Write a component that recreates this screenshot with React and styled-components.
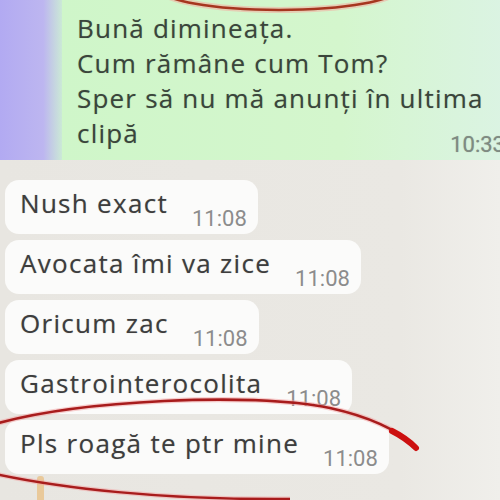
import React from 'react';
import styled, { createGlobalStyle } from 'styled-components';

const GlobalStyle = createGlobalStyle`
    body {
        margin: 0;
        background: #e9e7e2;
    }
`

const Screen = styled.div`
    position: relative;
    width: 500px;
    height: 500px;
    overflow: hidden;
    display: flex;
    flex-direction: column;
    background: linear-gradient(90deg, #e8e6e1 0%, #eae8e3 80%, #f0efeb 100%);
    font-family: "Open Sans", Roboto, sans-serif;
`

const TopRow = styled.div`
    display: flex;
    height: 160px;
    flex-shrink: 0;
`

const SideStrip = styled.div`
    width: 62px;
    flex-shrink: 0;
    background: linear-gradient(90deg, #b2aaf2 0%, #bdb6f0 70%, #cbe9d6 100%);
`

const OutBubble = styled.div`
    flex: 1;
    margin-right: -26px;
    padding: 11px 21px 0 15px;
    background: linear-gradient(90deg, #cff6c9 0%, #d4f6cd 60%, #dcf3e6 100%);
    font-size: 26px;
    line-height: 35px;
    letter-spacing: 1.2px;
    color: #3a453b;
    text-shadow: 0 0 1px rgba(40, 60, 40, 0.35);
    white-space: nowrap;
`

const LastLine = styled.div`
    display: flex;
    justify-content: space-between;
    align-items: flex-end;
`

const Time = styled.span`
    font-family: Roboto, "Open Sans", sans-serif;
    font-size: 22px;
    line-height: 21px;
    letter-spacing: 0;
    color: ${p => p.out ? '#7f8a82' : '#8c8c8c'};
    margin-left: ${p => p.out ? '0' : '24px'};
    margin-bottom: ${p => p.out ? '-4px' : '0'};
    white-space: nowrap;
`

const List = styled.div`
    display: flex;
    flex-direction: column;
    align-items: flex-start;
    gap: 6px;
    padding: 20px 0 0 5px;
`

const Bubble = styled.div`
    box-sizing: border-box;
    height: 54px;
    display: flex;
    align-items: flex-end;
    padding: 0 11px 5px 15px;
    background: #fbfbfa;
    border-radius: 14px;
`

const BubbleText = styled.span`
    font-size: 26px;
    line-height: 26px;
    letter-spacing: 1.3px;
    color: #3d3d3d;
    text-shadow: 0 0 1px rgba(0, 0, 0, 0.3);
    margin-bottom: 13px;
    white-space: nowrap;
`

const Marks = styled.svg`
    position: absolute;
    left: 0;
    top: 0;
    pointer-events: none;
`

const messages = [
    'Nush exact',
    'Avocata îmi va zice',
    'Oricum zac',
    'Gastrointerocolita',
    'Pls roagă te ptr mine',
];

const App = () => {
    return (
        <Screen>
            <GlobalStyle />
            <TopRow>
                <SideStrip />
                <OutBubble>
                    <div>Bună dimineața.</div>
                    <div>Cum rămâne cum Tom?</div>
                    <div>Sper să nu mă anunți în ultima</div>
                    <LastLine>
                        <span>clipă</span>
                        <Time out>10:33</Time>
                    </LastLine>
                </OutBubble>
            </TopRow>
            <List>
                {messages.map(m => (
                    <Bubble key={m}>
                        <BubbleText>{m}</BubbleText>
                        <Time>11:08</Time>
                    </Bubble>
                ))}
            </List>
            <Marks width="500" height="500" viewBox="0 0 500 500">
                <ellipse cx="279" cy="-12" rx="120" ry="22" fill="none" stroke="#f2b3a4" strokeWidth="6" opacity="0.6" />
                <ellipse cx="279" cy="-12" rx="120" ry="22" fill="none" stroke="#a6361f" strokeWidth="2.5" />
                <rect x="37" y="476" width="7" height="26" rx="3" fill="#eab060" opacity="0.55" />
                <path d="M -5 424 C 80 400, 250 392, 330 408 C 375 418, 400 432, 416 447" fill="none" stroke="#f4a0a0" strokeWidth="5" opacity="0.5" />
                <path d="M -5 424 C 80 400, 250 392, 330 408 C 375 418, 400 432, 416 447" fill="none" stroke="#a81c1c" strokeWidth="2.5" />
                <path d="M 392 431 Q 406 438 416 448" fill="none" stroke="#cc1010" strokeWidth="6" strokeLinecap="round" />
                <path d="M -5 474 C 60 488, 160 500, 290 499" fill="none" stroke="#f4a0a0" strokeWidth="5" opacity="0.5" />
                <path d="M -5 474 C 60 488, 160 500, 290 499" fill="none" stroke="#a81c1c" strokeWidth="2.5" />
            </Marks>
        </Screen>
    )
}

export default App
